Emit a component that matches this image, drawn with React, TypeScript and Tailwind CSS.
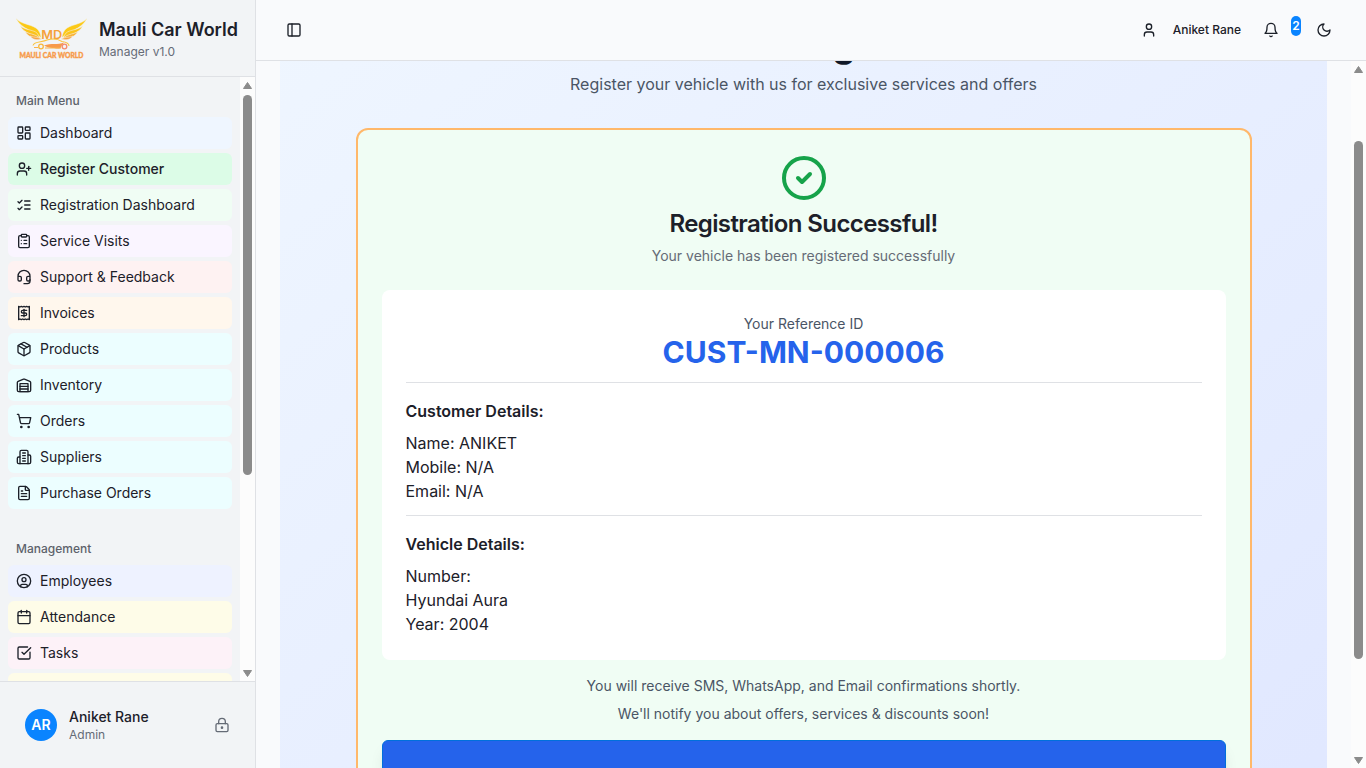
import React from "react";
import {
  Calendar, CircleCheck, CircleUser, ClipboardList, FileText, Headset,
  LayoutDashboard, LockKeyhole, Package, PanelLeft, ReceiptText,
  ShoppingCart, SquareCheckBig, User, UserPlus,
} from "lucide-react";

type IconProps = { className?: string };
type Item = { label: string; icon: React.ElementType; tone: string; active?: boolean };

function Stroke({ className, paths }: IconProps & { paths: string[] }) {
  return (
    <svg className={className} viewBox="0 0 24 24" fill="none" stroke="currentColor" strokeWidth="2" strokeLinecap="round" strokeLinejoin="round">
      {paths.map((d) => <path key={d} d={d} />)}
    </svg>
  );
}

const InvoiceIcon = ({ className }: IconProps) => (
  <Stroke className={className} paths={[
    "M4 2v20l2-1 2 1 2-1 2 1 2-1 2 1 2-1 2 1V2l-2 1-2-1-2 1-2-1-2 1-2-1-2 1Z",
    "M16 8h-6a2 2 0 1 0 0 4h4a2 2 0 1 1 0 4H8",
    "M12 17.5v-11",
  ]} />
);

const ChecklistIcon = ({ className }: IconProps) => (
  <Stroke className={className} paths={["m3 17 2 2 4-4", "m3 7 2 2 4-4", "M13 6h8", "M13 12h8", "M13 18h8"]} />
);

const WarehouseIcon = ({ className }: IconProps) => (
  <Stroke className={className} paths={[
    "M22 8.35V20a2 2 0 0 1-2 2H4a2 2 0 0 1-2-2V8.35A2 2 0 0 1 3.26 6.5l8-3.2a2 2 0 0 1 1.48 0l8 3.2A2 2 0 0 1 22 8.35Z",
    "M6 18h12", "M6 14h12", "M6 10h12v12H6z",
  ]} />
);

const BuildingIcon = ({ className }: IconProps) => (
  <Stroke className={className} paths={[
    "M6 22V4a2 2 0 0 1 2-2h8a2 2 0 0 1 2 2v18Z",
    "M6 12H4a2 2 0 0 0-2 2v6a2 2 0 0 0 2 2h2",
    "M18 9h2a2 2 0 0 1 2 2v9a2 2 0 0 1-2 2h-2",
    "M10 6h4", "M10 10h4", "M10 14h4", "M10 18h4",
  ]} />
);

const BellIcon = ({ className }: IconProps) => (
  <Stroke className={className} paths={["M6 8a6 6 0 0 1 12 0c0 7 3 9 3 9H3s3-2 3-9", "M10.3 21a1.94 1.94 0 0 0 3.4 0"]} />
);

const MoonIcon = ({ className }: IconProps) => (
  <Stroke className={className} paths={["M12 3a6 6 0 0 0 9 9 9 9 0 1 1-9-9Z"]} />
);

const mainMenu: Item[] = [
  { label: "Dashboard", icon: LayoutDashboard, tone: "bg-[#eff6ff]" },
  { label: "Register Customer", icon: UserPlus, tone: "bg-[#dcfce7]", active: true },
  { label: "Registration Dashboard", icon: ChecklistIcon, tone: "bg-[#f0fdf4]" },
  { label: "Service Visits", icon: ClipboardList, tone: "bg-[#faf5ff]" },
  { label: "Support & Feedback", icon: Headset, tone: "bg-[#fef2f2]" },
  { label: "Invoices", icon: InvoiceIcon, tone: "bg-[#fff7ed]" },
  { label: "Products", icon: Package, tone: "bg-[#ecfeff]" },
  { label: "Inventory", icon: WarehouseIcon, tone: "bg-[#ecfeff]" },
  { label: "Orders", icon: ShoppingCart, tone: "bg-[#ecfeff]" },
  { label: "Suppliers", icon: BuildingIcon, tone: "bg-[#ecfeff]" },
  { label: "Purchase Orders", icon: FileText, tone: "bg-[#ecfeff]" },
];

const management: Item[] = [
  { label: "Employees", icon: CircleUser, tone: "bg-[#eef2ff]" },
  { label: "Attendance", icon: Calendar, tone: "bg-[#fefce8]" },
  { label: "Tasks", icon: SquareCheckBig, tone: "bg-[#fdf2f8]" },
  { label: "Leave", icon: ReceiptText, tone: "bg-[#fefce8]" },
];

function Group({ title, items }: { title: string; items: Item[] }) {
  return (
    <div className="flex flex-col p-2">
      <div className="flex h-8 items-center px-2 text-xs font-medium text-[#5d626b]">{title}</div>
      <ul className="flex flex-col gap-1">
        {items.map(({ label, icon: Icon, tone, active }) => (
          <li key={label} className={`flex h-8 shrink-0 items-center gap-2 rounded-md px-2 text-sm ${active ? "font-medium" : "font-normal"} ${tone}`}>
            <Icon className="size-4 shrink-0" />
            <span>{label}</span>
          </li>
        ))}
      </ul>
    </div>
  );
}

function Scrollbar({ before, thumb }: { before: string; thumb: string }) {
  return (
    <div className="flex w-[15px] shrink-0 flex-col items-center bg-[#fcfcfc] pt-[5px] pb-1">
      <svg width="9" height="7" viewBox="0 0 9 7" className="shrink-0"><path d="M4.5 0.5 8.5 6.5h-8Z" fill="#8b8b8b" stroke="#8b8b8b" strokeLinejoin="round" /></svg>
      <div className={`shrink-0 ${before}`} />
      <div className={`w-[9px] shrink-0 rounded-full bg-[#8b8b8b] ${thumb}`} />
      <div className="flex-1" />
      <svg width="9" height="7" viewBox="0 0 9 7" className="shrink-0"><path d="M4.5 6.5 8.5 0.5h-8Z" fill="#8b8b8b" stroke="#8b8b8b" strokeLinejoin="round" /></svg>
    </div>
  );
}

function Wing() {
  return (
    <g stroke="#f2f4f6" strokeWidth="0.5">
      <path d="M0 2C4 8 14 8 20 12C23 14 25 18 25 22C20 15 5 14 0 2Z" fill="#fcc916" />
      <path d="M4 9.500C8 14 17 13.500 21 17L24.500 22C17 18 8 18 4 9.500Z" fill="#fbc31c" />
      <path d="M9 15.500C13 18.500 18 17 24.500 22.500C17 22 12 21 9 15.500Z" fill="#f9b233" />
      <path d="M14 20C17 21.500 20 20.500 26 23C21 24.500 16 23.500 14 20Z" fill="#f7a341" />
    </g>
  );
}

function Logo() {
  return (
    <svg width="71" height="44" viewBox="0 0 71 44" className="shrink-0">
      <Wing />
      <g transform="translate(71 0) scale(-1 1)"><Wing /></g>
      <text x="35.800" y="22.500" textAnchor="middle" textLength="21" lengthAdjust="spacingAndGlyphs" fontFamily="Inter, sans-serif" fontSize="12" fontWeight="600" fill="#f5a13a">MD</text>
      <path d="M17 29.500C18 25 26 26.500 31 24C36 22.500 42 23 46 25.500C50 26 53 27 53 30" fill="none" stroke="#fac33c" strokeWidth="1.100" />
      <path d="M28 29.500C35 27 42 29 48 26.500L45.500 30C45 33 42 33 38 32C34 32.500 31 31 28 29.500Z" fill="#f79a4b" />
      <path d="M18 31.500h4M29 32h16" stroke="#f8b348" />
      <circle cx="25" cy="30.500" r="2.300" fill="none" stroke="#f9b73b" strokeWidth="1.300" />
      <circle cx="48.500" cy="30.500" r="2.300" fill="none" stroke="#f58b6c" strokeWidth="1.300" />
      <text x="35.500" y="41.700" textAnchor="middle" textLength="64" lengthAdjust="spacingAndGlyphs" fontFamily="Lato, sans-serif" fontSize="8" fontWeight="900" fill="#f79c4c" stroke="#f79c4c" strokeWidth="0.400">MAULI CAR WORLD</text>
    </svg>
  );
}

export default function App() {
  return (
    <div className="flex h-screen w-full overflow-hidden bg-[#f9fafc] font-[Inter,sans-serif] text-[#1c2029]">
      <aside className="flex w-64 shrink-0 flex-col border-r border-[#dfe1e5] bg-[#f2f4f6]">
        <div className="flex h-[77px] shrink-0 items-center gap-3 border-b border-[#dfe1e5] pl-4">
          <Logo />
          <div className="flex flex-col">
            <span className="text-lg leading-7 font-semibold whitespace-nowrap">Mauli Car World</span>
            <span className="text-xs text-[#656b76]">Manager v1.0</span>
          </div>
        </div>
        <div className="flex min-h-0 flex-1">
          <nav className="flex min-w-0 flex-1 flex-col gap-2 overflow-hidden">
            <Group title="Main Menu" items={mainMenu} />
            <Group title="Management" items={management} />
          </nav>
          <Scrollbar before="h-[6px]" thumb="h-[380px]" />
        </div>
        <div className="flex h-[87px] shrink-0 items-center border-t border-[#dfe1e5] px-[25px]">
          <div className="flex size-8 items-center justify-center rounded-full bg-[#0a84ff] text-sm font-semibold text-white">AR</div>
          <div className="ml-3 flex flex-1 flex-col">
            <span className="text-sm leading-[18px] font-medium">Aniket Rane</span>
            <span className="pt-px text-xs leading-4 text-[#656b76]">Admin</span>
          </div>
          <LockKeyhole className="size-4 text-[#656b76]" />
        </div>
      </aside>

      <div className="flex min-w-0 flex-1 flex-col">
        <header className="flex h-[61px] shrink-0 items-center border-b border-[#dfe1e5] pl-[30px] pr-[34px]">
          <PanelLeft className="size-4" />
          <div className="flex-1" />
          <User className="size-4" />
          <span className="ml-4 text-xs font-medium">Aniket Rane</span>
          <BellIcon className="ml-[22px] size-4" />
          <span className="mr-[15px] mb-2 ml-3 flex h-5 w-[10px] items-center justify-center rounded-full bg-[#0a84ff] text-xs font-semibold text-white">2</span>
          <MoonIcon className="size-4" />
        </header>
        <div className="flex min-h-0 flex-1">
          <main className="min-w-0 flex-1 overflow-hidden pr-6 pl-6">
            <div className="-mt-[61px] h-[870px] bg-linear-to-br from-[#eff6ff] to-[#e0e7ff] pt-6">
              <h1 className="mb-2 text-center text-4xl font-bold text-[#101828]">Customer Registration</h1>
              <p className="mb-8 text-center text-base text-[#4a5565]">Register your vehicle with us for exclusive services and offers</p>
              <section className="mx-auto flex h-[720px] w-[896px] flex-col rounded-xl border-2 border-[#ffb86a] bg-[#f0fdf4] p-6">
                <CircleCheck className="size-12 shrink-0 self-center text-[#16a34a]" />
                <h2 className="mt-1.5 text-center text-2xl leading-8 font-semibold tracking-tight">Registration Successful!</h2>
                <p className="mt-1.5 text-center text-sm text-[#656b76]">Your vehicle has been registered successfully</p>
                <div className="mt-6 rounded-lg bg-white p-6">
                  <div className="border-b border-[#dfe1e5] pb-3 text-center">
                    <p className="text-sm text-[#4a5565]">Your Reference ID</p>
                    <p className="text-3xl font-bold text-[#2563eb]">CUST-MN-000006</p>
                  </div>
                  <div className="border-b border-[#dfe1e5] pt-4 pb-3">
                    <h3 className="mb-2 font-semibold">Customer Details:</h3>
                    <p>Name: ANIKET</p>
                    <p>Mobile: N/A</p>
                    <p>Email: N/A</p>
                  </div>
                  <div className="pt-4">
                    <h3 className="mb-2 font-semibold">Vehicle Details:</h3>
                    <p>Number:</p>
                    <p>Hyundai Aura</p>
                    <p>Year: 2004</p>
                  </div>
                </div>
                <div className="mt-4 space-y-2 text-center text-sm text-[#4a5565]">
                  <p>You will receive SMS, WhatsApp, and Email confirmations shortly.</p>
                  <p>We'll notify you about offers, services &amp; discounts soon!</p>
                </div>
                <button className="mt-4 h-20 shrink-0 rounded-md border border-[#0070dc] bg-[#2563eb] shadow-lg" />
              </section>
            </div>
          </main>
          <Scrollbar before="h-[68px]" thumb="h-[518px]" />
        </div>
      </div>
    </div>
  );
}
